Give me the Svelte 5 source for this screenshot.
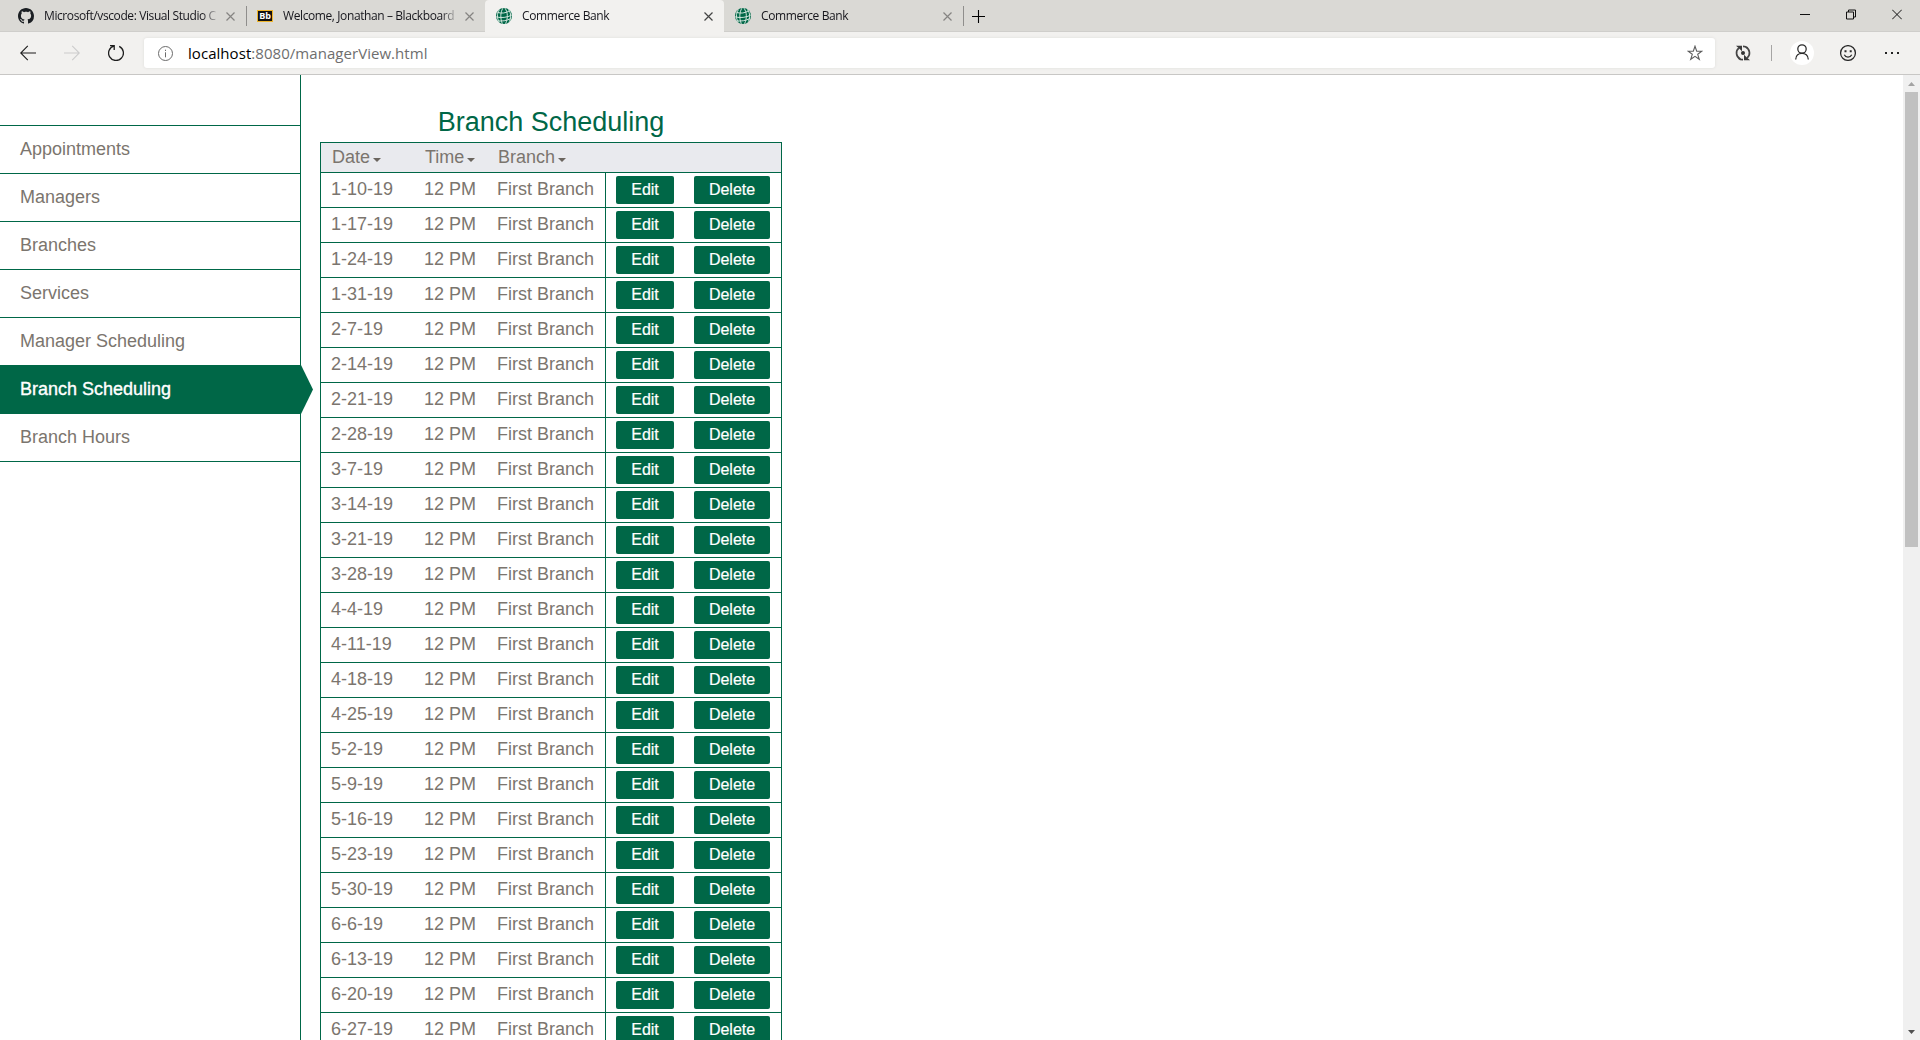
<script>
  const tabs = [
    { title: 'Microsoft/vscode: Visual Studio C', icon: 'github', line: true },
    { title: 'Welcome, Jonathan – Blackboard', icon: 'bb' },
    { title: 'Commerce Bank', icon: 'globe', active: true },
    { title: 'Commerce Bank', icon: 'globe', line: true }
  ];
  const menu = ['Appointments', 'Managers', 'Branches', 'Services', 'Manager Scheduling', 'Branch Scheduling', 'Branch Hours'];
  const current = 'Branch Scheduling';
  const columns = ['Date', 'Time', 'Branch'];
  const dates = [
    '1-10-19', '1-17-19', '1-24-19', '1-31-19', '2-7-19', '2-14-19', '2-21-19', '2-28-19', '3-7-19',
    '3-14-19', '3-21-19', '3-28-19', '4-4-19', '4-11-19', '4-18-19', '4-25-19', '5-2-19', '5-9-19',
    '5-16-19', '5-23-19', '5-30-19', '6-6-19', '6-13-19', '6-20-19', '6-27-19'
  ];
</script>

<div class="window">
  <header class="tabstrip">
    {#each tabs as tab}
      <div class="tab" class:active={tab.active} class:line={tab.line}>
        {#if tab.icon === 'github'}
          <svg class="fav" viewBox="0 0 16 16"><path fill="#1b1f23" d="M8 0C3.58 0 0 3.58 0 8c0 3.54 2.29 6.53 5.47 7.59.4.07.55-.17.55-.38 0-.19-.01-.82-.01-1.49-2.01.37-2.53-.49-2.69-.94-.09-.23-.48-.94-.82-1.13-.28-.15-.68-.52-.01-.53.63-.01 1.08.58 1.23.82.72 1.21 1.87.87 2.33.66.07-.52.28-.87.51-1.07-1.78-.2-3.64-.89-3.64-3.95 0-.87.31-1.59.82-2.15-.08-.2-.36-1.02.08-2.12 0 0 .67-.21 2.2.82.64-.18 1.32-.27 2-.27s1.36.09 2 .27c1.53-1.04 2.2-.82 2.2-.82.44 1.1.16 1.92.08 2.12.51.56.82 1.27.82 2.15 0 3.07-1.87 3.75-3.65 3.95.29.25.54.73.54 1.48 0 1.07-.01 1.93-.01 2.2 0 .21.15.46.55.38A8.01 8.01 0 0 0 16 8c0-4.42-3.58-8-8-8z" /></svg>
        {:else if tab.icon === 'bb'}
          <span class="fav bb"><b>Bb</b></span>
        {:else}
          <svg class="fav" viewBox="0 0 16 16">
            <circle cx="8" cy="8" r="8" fill="#006747" />
            <g fill="none" stroke="#dcebe4" stroke-width="0.95">
              <path d="M6.8.3C4.300 4.500 4.200 10.500 6.300 15.700M9 .2c3 4.300 3 10.300.6 15.500M3.300 1.800C.8 6 .8 10 3.200 14M12.500 1.500c2.700 4 2.800 8 .8 12.200" />
              <path d="M1.500 4.400c4 1.300 8.500.8 12-1.600M.2 8.900c5 1.200 11 .7 15.500-1.800M1.600 12.800c4.400.7 9-.1 13.400-2.300" />
            </g>
          </svg>
        {/if}
        <span class="title">{tab.title}</span>
        <svg class="x" viewBox="0 0 9 9"><path d="M.5.5l8 8M8.500.5l-8 8" /></svg>
      </div>
    {/each}
    <svg class="plus" viewBox="0 0 13 13"><path d="M6.500 0v13M0 6.500h13" /></svg>
    <div class="controls">
      <svg viewBox="0 0 10 11"><path d="M0 5.500h10" /></svg>
      <svg viewBox="0 0 10 11"><path d="M.5 3h7v7h-7zM2.500 3V1h7v7h-2" /></svg>
      <svg viewBox="0 0 10 11"><path d="M.2.7l9.600 9.600M9.800.7L.2 10.300" /></svg>
    </div>
  </header>

  <div class="toolbar">
    <svg class="nav" viewBox="0 0 16 16"><path d="M16 8H.8M7.800.8L.7 8l7.100 7.200" /></svg>
    <svg class="nav off" viewBox="0 0 16 16"><path d="M0 8h15.200M8.200.8L15.300 8l-7.100 7.200" /></svg>
    <svg class="nav" viewBox="0 0 16 16"><path d="M2 .7h4.200v4.200M6.200.9a7.400 7.400 0 1 0 5 .5" stroke-width="1.300" /></svg>
    <div class="address">
      <svg class="info" viewBox="0 0 15 15"><circle cx="7.500" cy="7.500" r="7" /><path d="M7.500 6.300v5M7.500 3.700v1.300" /></svg>
      <span class="url"><em>localhost</em>:8080/managerView.html</span>
      <svg class="star" viewBox="0 0 16 16"><path d="M8 1.200l1.700 5h5.200l-4.200 3.100 1.600 5L8 11.300l-4.300 3 1.600-5L1.100 6.200h5.200z" /></svg>
    </div>
    <svg class="sync" viewBox="0 0 16 16">
      <path d="M3.800 3.200C.3 6 .8 11.800 5.600 14.200M12.200 12.800c3.500-2.800 3-8.600-1.800-11M8 1.300c2.300 0 3.500.5 4.600 1.600M8 14.700c-2.300 0-3.500-.5-4.600-1.600" fill="none" stroke="#454545" stroke-width="1.700" />
      <path d="M1 .8h6v5.400L5.200 4.400 3.500 3zM15 15.200H9V9.800l1.800 1.800 1.700 1.400z" fill="#3b3b3b" /><circle cx="8" cy="8" r="2" fill="#333" />
    </svg>
    <span class="divider"></span>
    <span class="profile"><svg viewBox="0 0 16 16"><circle cx="8" cy="5" r="4.200" /><path d="M1.700 15.500c0-8.300 12.600-8.300 12.600 0" /></svg></span>
    <svg class="smile" viewBox="0 0 16 16"><circle cx="8" cy="8" r="7.400" /><path d="M4.300 9.800c1.400 3 6 3 7.400 0" /><path d="M4.500 5.200h2v2h-2zM9.700 5.200h2v2h-2z" class="solid" /></svg>
    <svg class="dots" viewBox="0 0 14 2"><path d="M0 0h2v2H0zM6 0h2v2H6zM12 0h2v2h-2z" /></svg>
  </div>

  <div class="page">
    <nav>
      {#each menu as item}
        <a class:current={item === current} href="#top">{item}</a>
      {/each}
    </nav>
    <main>
      <h1>Branch Scheduling</h1>
      <div class="table">
        <div class="head">
          {#each columns as column}
            <span>{column}<svg viewBox="0 0 8 4"><path d="M0 0h8L4 4z" /></svg></span>
          {/each}
        </div>
        {#each dates as date}
          <div class="row">
            <span>{date}</span><span>12 PM</span><span>First Branch</span>
            <div class="actions"><button>Edit</button><button class="delete">Delete</button></div>
          </div>
        {/each}
      </div>
    </main>
    <div class="scrollbar">
      <svg viewBox="0 0 7 4"><path d="M3.500 0L7 4H0z" fill="#a3a3a3" /></svg>
      <div class="thumb"></div>
      <svg class="down" viewBox="0 0 7 4"><path d="M0 0h7L3.500 4z" fill="#505050" /></svg>
    </div>
  </div>
</div>

<style>
  :global(body) { margin: 0; overflow: hidden; }
  * { box-sizing: border-box; }
  .window { width: 1920px; height: 1040px; display: flex; flex-direction: column; overflow: hidden; background: #fff; font-family: 'Liberation Sans', Arial, sans-serif; }
  svg { display: block; flex: none; }

  .tabstrip { height: 32px; flex: none; display: flex; padding-left: 7px; background: #dad9d5; box-shadow: inset 0 -1px #cfcecb; }
  .tab { position: relative; width: 239px; display: flex; align-items: center; padding: 0 11px; font: 12px 'Open Sans', sans-serif; color: #16161c; }
  .tab.active { background: #f2f1ef; border-radius: 4px 4px 0 0; }
  .tab.line::after { content: ''; position: absolute; right: -1px; top: 6px; width: 1px; height: 20px; background: #8f8e8c; }
  .fav { width: 16px; height: 16px; flex: none; margin-right: 10px; }
  .bb { height: 12px; background: #111; border: 1px solid #eeb52d; display: flex; align-items: center; justify-content: center; color: #fff; font-size: 9px; line-height: 8px; }
  .title { width: 174px; flex: none; padding-bottom: 1px; white-space: nowrap; letter-spacing: -0.4px; -webkit-mask-image: linear-gradient(to right, #000 158px, transparent 176px); mask-image: linear-gradient(to right, #000 158px, transparent 176px); }
  .x { width: 9px; height: 9px; margin-left: 8px; fill: none; stroke: #858482; stroke-width: 1.2; }
  .active .x { stroke: #444; }
  .plus { width: 13px; height: 13px; margin: 10px 0 0 9px; stroke: #000; stroke-width: 1.1; }
  .controls { margin-left: auto; display: flex; gap: 36px; padding: 9px 18px 0 0; }
  .controls svg { width: 10px; height: 11px; fill: none; stroke: #111; stroke-width: 1; }

  .toolbar { height: 43px; flex: none; display: flex; align-items: center; padding-left: 20px; background: #f2f1ef; border-bottom: 1px solid #c8c7c5; }
  .nav { width: 16px; height: 16px; margin-right: 28px; fill: none; stroke: #1d1d1d; stroke-width: 1.1; }
  .nav.off { stroke: #ccc; }
  .nav:nth-child(3) { margin-right: 20px; }
  .address { width: 1571px; height: 30px; background: #fff; border-radius: 3px; display: flex; align-items: center; padding: 0 12px 0 14px; box-shadow: 0 0 3px #dddcda; }
  .info { width: 15px; height: 15px; fill: none; stroke: #6b6b6b; }
  .url { margin-left: 15px; font: 15px 'Open Sans', sans-serif; letter-spacing: 0.05px; color: #6e6e6e; }
  .url em { font-style: normal; color: #000; }
  .star { width: 16px; height: 16px; margin-left: auto; fill: none; stroke: #5d5d5d; stroke-width: 1.1; }
  .sync { width: 16px; height: 16px; margin-left: 20px; }
  .divider { width: 1px; height: 16px; background: #a6a5a4; margin: 0 18px 0 20px; }
  .profile { width: 24px; height: 24px; border-radius: 50%; background: #fff; display: flex; align-items: flex-start; justify-content: center; padding-top: 3px; }
  .profile svg, .smile { width: 16px; height: 16px; fill: none; stroke: #2a2a2a; stroke-width: 1.25; }
  .smile { margin-left: 26px; }
  .solid { fill: #2a2a2a; stroke: none; }
  .dots { width: 14px; height: 2px; margin-left: 29px; fill: #222; }

  .page { flex: 1; min-height: 0; display: flex; }
  nav { width: 301px; flex: none; padding-top: 50px; border-right: 1px solid #006747; }
  nav a { position: relative; display: block; height: 48px; border-top: 1px solid #006747; padding: 0 20px; font-size: 18px; line-height: 46px; color: #7b756e; text-decoration: none; }
  nav a:last-child { height: 49px; border-bottom: 1px solid #006747; }
  nav a.current { background: #006747; color: #fff; -webkit-text-stroke: 0.35px #fff; }
  .current::after { content: ''; position: absolute; left: 300px; top: -1px; width: 13px; height: 49px; background: #006747; clip-path: polygon(0 0, 1px 0, 100% 50%, 1px 100%, 0 100%); }

  main { width: 462px; margin-left: 19px; flex: none; overflow: hidden; }
  h1 { margin: 0; height: 67px; padding-top: 32px; font-size: 27px; line-height: 31px; font-weight: 400; text-align: center; color: #006747; }
  .table { border: 1px solid #006747; font-size: 18px; color: #7b756e; }
  .head, .row { display: grid; grid-template-columns: 93px 73px 118px 1fr; border-bottom: 1px solid #006747; }
  .head { height: 30px; background: #e9eaee; line-height: 28px; }
  .head span { display: flex; align-items: center; padding: 0 0 2px 11px; }
  .head svg { width: 8px; height: 4px; margin: 5px 0 0 3px; fill: #6b655e; }
  .row { height: 35px; line-height: 32px; }
  .row > span { padding-left: 10px; white-space: nowrap; }
  .actions { border-left: 1px solid #006747; display: flex; gap: 20px; padding: 3px 0 0 10px; }
  button { width: 58px; height: 28px; padding: 0; border: 0; border-radius: 2px; background: #006747; color: #fff; font: 16px/26px 'Liberation Sans', Arial, sans-serif; -webkit-text-stroke: 0.2px #fff; }
  .delete { width: 76px; }

  .scrollbar { width: 17px; margin-left: auto; padding: 7px 2px 6px; background: #f0f0f0; display: flex; flex-direction: column; align-items: center; }
  .scrollbar svg { width: 7px; height: 4px; }
  .thumb { width: 13px; height: 455px; margin-top: 6px; background: #c1c1c1; }
  .scrollbar .down { margin-top: auto; }
</style>
